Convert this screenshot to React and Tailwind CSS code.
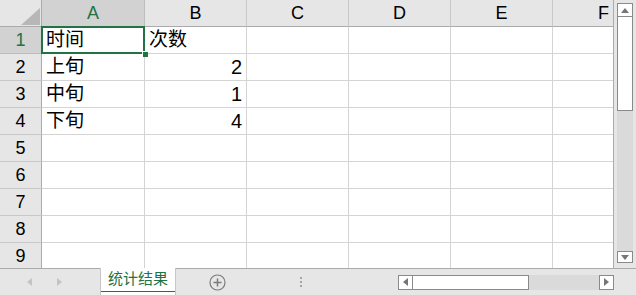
import React from 'react';

const FONT = { fontFamily: '"Liberation Sans", "Noto Sans CJK SC", sans-serif' };

const cols = ['A', 'B', 'C', 'D', 'E', 'F'];
const rows = [
  ['时间', '次数'],
  ['上旬', 2],
  ['中旬', 1],
  ['下旬', 4],
  [], [], [], [], [],
];

function Corner() {
  return (
    <div className="h-[27px] bg-[#e6e6e6] border-r border-b border-[#ababab] relative">
      <svg className="absolute left-[21px] top-[8px]" width="19" height="17" viewBox="0 0 19 17">
        <polygon points="19,0 19,17 0,17" fill="#b7b7b7" />
      </svg>
    </div>
  );
}

function ColHeader({ label, active }) {
  return (
    <div
      className={`h-[27px] flex items-center justify-center text-[18px] border-b border-r ${
        active ? 'bg-[#d2d2d2] text-[#217346] border-b-[#ababab] border-r-[#bdbdbd]' : 'bg-[#e6e6e6] text-black border-b-[#ababab] border-r-[#c8c8c8]'
      }`}
    >
      {label}
    </div>
  );
}

function RowHeader({ n, active }) {
  return (
    <div
      className={`h-[27px] flex items-center justify-center text-[18px] border-r border-r-[#ababab] border-b ${
        active ? 'bg-[#d2d2d2] text-[#217346] border-b-[#bdbdbd]' : 'bg-[#e6e6e6] text-black border-b-[#c8c8c8]'
      }`}
    >
      {n}
    </div>
  );
}

function Cell({ value, selected }) {
  const isNum = typeof value === 'number';
  return (
    <div className={`h-[27px] relative border-r border-b border-[#d4d4d4] bg-white ${selected ? 'z-10' : ''}`}>
      <div className={`absolute inset-0 flex items-end pb-[1px] text-[19px] leading-[24px] text-black ${isNum ? 'justify-end pr-[4px] text-[20px]' : 'pl-[4px]'}`}>
        {value}
      </div>
      {selected && (
        <>
          <div className="absolute left-[-1px] top-[-1px] right-[-1px] bottom-[-1px] border-2 border-[#217346]" />
          <div className="absolute right-[-4px] bottom-[-4px] w-[6px] h-[6px] bg-[#217346] border-l border-t border-white" />
        </>
      )}
    </div>
  );
}

function VScroll() {
  return (
    <div className="w-[22px] h-full bg-[#e6e6e6] flex flex-col pl-[3px] pr-[3px] pt-[3px] pb-[5px]">
      <div className="h-[14px] bg-white border border-[#8a8a8a] flex items-center justify-center">
        <svg width="8" height="5" viewBox="0 0 8 5"><polygon points="4,0 8,5 0,5" fill="#767676" /></svg>
      </div>
      <div className="flex-1 bg-[#dadada] flex flex-col">
        <div className="h-[94px] bg-white border border-[#8a8a8a] border-t-0" />
      </div>
      <div className="h-[12px] bg-white border border-[#8a8a8a] flex items-center justify-center">
        <svg width="8" height="5" viewBox="0 0 8 5"><polygon points="0,0 8,0 4,5" fill="#767676" /></svg>
      </div>
    </div>
  );
}

function BottomBar() {
  return (
    <div className="h-[27px] bg-[#e6e6e6] border-t border-[#ababab] flex items-stretch">
      <div className="w-[100px] flex items-center">
        <svg className="ml-[27px]" width="5" height="8" viewBox="0 0 5 8"><polygon points="5,0 5,8 0,4" fill="#c4c4c4" /></svg>
        <svg className="ml-[25px]" width="5" height="8" viewBox="0 0 5 8"><polygon points="0,0 0,8 5,4" fill="#c4c4c4" /></svg>
      </div>
      <div className="w-[76px] -mt-[1px] bg-white border-l border-r border-[#c6c6c6] flex flex-col">
        <div className="flex-1 flex items-center justify-center text-[15px] text-[#217346]">统计结果</div>
        <div className="h-[3px] bg-[#217346] mb-[3px]" />
      </div>
      <div className="w-[84px] flex items-center">
        <svg className="ml-[33px]" width="17" height="17" viewBox="0 0 17 17">
          <circle cx="8.5" cy="8.5" r="7.5" fill="none" stroke="#7b7b7b" strokeWidth="1.2" />
          <path d="M8.5 4.5v8M4.5 8.5h8" stroke="#7b7b7b" strokeWidth="1.5" />
        </svg>
      </div>
      <div className="flex-1 flex items-center justify-end pr-[96px]">
        <div className="flex flex-col gap-[2px]">
          <div className="w-[2px] h-[2px] bg-[#a6a6a6]" />
          <div className="w-[2px] h-[2px] bg-[#a6a6a6]" />
          <div className="w-[2px] h-[2px] bg-[#a6a6a6]" />
        </div>
      </div>
      <div className="w-[216px] flex items-center">
        <div className="w-full h-[15px] flex bg-[#dadada]">
          <div className="w-[15px] bg-white border border-[#8a8a8a] flex items-center justify-center">
            <svg width="5" height="8" viewBox="0 0 5 8"><polygon points="5,0 5,8 0,4" fill="#767676" /></svg>
          </div>
          <div className="w-[116px] bg-white border border-l-0 border-[#8a8a8a]" />
          <div className="flex-1" />
          <div className="w-[15px] bg-white border border-[#8a8a8a] flex items-center justify-center">
            <svg width="5" height="8" viewBox="0 0 5 8"><polygon points="0,0 0,8 5,4" fill="#767676" /></svg>
          </div>
        </div>
      </div>
      <div className="w-[22px]" />
    </div>
  );
}

export default function App() {
  return (
    <div className="w-[636px] h-[295px] overflow-hidden bg-[#e6e6e6] flex flex-col" style={FONT}>
      <div className="h-[268px] flex">
        <div className="w-[614px] h-full overflow-hidden bg-white border-r border-[#ababab]">
          <div className="grid grid-cols-[42px_103px_102px_102px_102px_102px_102px] w-[655px]">
            <Corner />
            {cols.map((c) => (
              <ColHeader key={c} label={c} active={c === 'A'} />
            ))}
            {rows.map((r, i) => (
              <React.Fragment key={i}>
                <RowHeader n={i + 1} active={i === 0} />
                {cols.map((c, j) => (
                  <Cell key={c} value={r[j]} selected={i === 0 && j === 0} />
                ))}
              </React.Fragment>
            ))}
          </div>
        </div>
        <VScroll />
      </div>
      <BottomBar />
    </div>
  );
}
